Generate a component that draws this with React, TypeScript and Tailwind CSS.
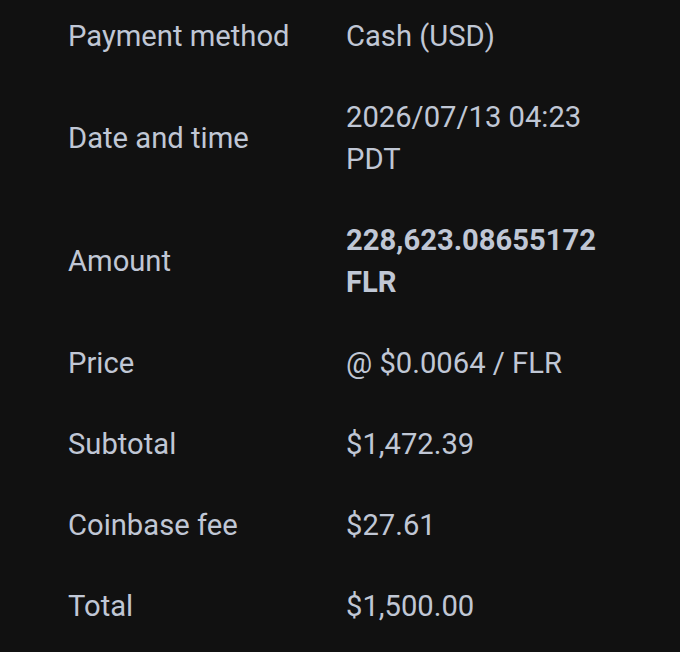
export default function App() {
  const rows: { label: string; value: string; bold?: boolean }[] = [
    { label: "Payment method", value: "Cash (USD)" },
    { label: "Date and time", value: "2026/07/13 04:23 PDT" },
    { label: "Amount", value: "228,623.08655172 FLR", bold: true },
    { label: "Price", value: "@ $0.0064 / FLR" },
    { label: "Subtotal", value: "$1,472.39" },
    { label: "Coinbase fee", value: "$27.61" },
    { label: "Total", value: "$1,500.00" },
  ];
  return (
    <div
      className="w-[680px] h-[652px] overflow-hidden bg-[#111111] text-[#c0c7d5]"
      style={{ fontFamily: "Roboto, 'Liberation Sans', sans-serif" }}
    >
      <div className="mt-[-4.5px] pl-[68px] pr-[60px] flex flex-col">
        {rows.map((r) => (
          <div key={r.label} className="grid grid-cols-[278px_1fr] items-center py-[19.5px] text-[29.2px] leading-[42px]">
            <div>{r.label}</div>
            <div className={r.bold ? "font-bold" : ""}>{r.value}</div>
          </div>
        ))}
      </div>
    </div>
  );
}
